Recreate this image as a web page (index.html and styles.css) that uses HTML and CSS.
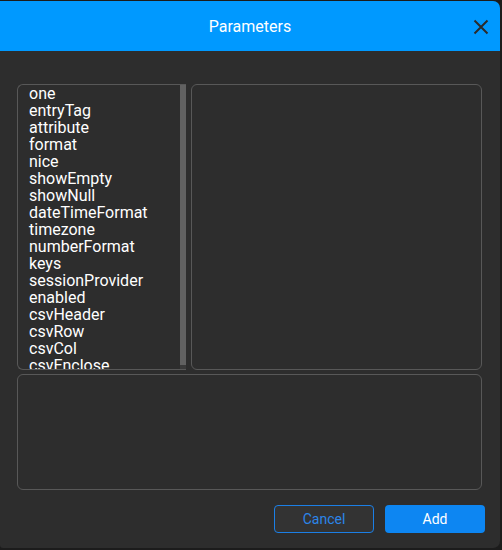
FILE: index.html
```html
<!DOCTYPE html>
<html>
<head>
<meta charset="utf-8">
<link rel="stylesheet" href="styles.css">
</head>
<body>
<div class="dialog">
  <div class="header">
    <span class="title">Parameters</span>
    <svg class="close" width="16" height="16" viewBox="0 0 16 16"><path d="M1.5 1.5 L14.5 14.5 M14.5 1.5 L1.5 14.5" stroke="#2b2b2b" stroke-width="2" fill="none"/></svg>
  </div>
  <div class="body">
    <div class="top-row">
      <div class="list-box">
        <div class="list">
          <div class="item">one</div>
          <div class="item">entryTag</div>
          <div class="item">attribute</div>
          <div class="item">format</div>
          <div class="item">nice</div>
          <div class="item">showEmpty</div>
          <div class="item">showNull</div>
          <div class="item">dateTimeFormat</div>
          <div class="item">timezone</div>
          <div class="item">numberFormat</div>
          <div class="item">keys</div>
          <div class="item">sessionProvider</div>
          <div class="item">enabled</div>
          <div class="item">csvHeader</div>
          <div class="item">csvRow</div>
          <div class="item">csvCol</div>
          <div class="item">csvEnclose</div>
        </div>
        <div class="scrollbar"><div class="thumb"></div></div>
      </div>
      <div class="detail-box"></div>
    </div>
    <div class="text-box"></div>
    <div class="actions">
      <button class="btn cancel">Cancel</button>
      <button class="btn add">Add</button>
    </div>
  </div>
</div>
</body>
</html>
```

FILE: styles.css
```css
html, body {
  margin: 0;
  padding: 0;
  background: #1c1c1c;
  font-family: Roboto, "Liberation Sans", sans-serif;
}
body {
  width: 502px;
  height: 550px;
  overflow: hidden;
}
.dialog {
  margin-top: 1px;
  width: 500px;
  height: 547px;
  background: #2d2d2d;
  border-radius: 0 7px 7px 3px;
  overflow: hidden;
  display: flex;
  flex-direction: column;
}
.header {
  height: 50px;
  flex: 0 0 50px;
  background: #0099ff;
  display: flex;
  align-items: center;
  justify-content: center;
  position: relative;
}
.title {
  color: #ffffff;
  font-size: 16px;
  margin-top: 1px;
}
.close {
  position: absolute;
  right: 11px;
  top: 18px;
}
.body {
  padding: 33px 18px 0 17px;
  display: flex;
  flex-direction: column;
}
.top-row {
  display: flex;
  height: 286px;
  gap: 5px;
}
.list-box {
  width: 168px;
  border: 1px solid #585858;
  border-right: none;
  border-radius: 6px 0 0 6px;
  display: flex;
  overflow: hidden;
}
.list {
  flex: 1;
  overflow: hidden;
  padding-left: 11px;
  padding-top: 0px;
}
.item {
  color: #ffffff;
  font-size: 16px;
  line-height: 17px;
  white-space: nowrap;
}
.scrollbar {
  width: 6px;
  background: #3a3a3a;
  display: flex;
  flex-direction: column;
}
.thumb {
  flex: 1;
  margin-bottom: 4px;
  background: #616161;
}
.detail-box {
  width: 289px;
  border: 1px solid #585858;
  border-radius: 6px;
}
.text-box {
  margin-top: 4px;
  height: 114px;
  border: 1px solid #585858;
  border-radius: 6px;
}
.actions {
  display: flex;
  justify-content: flex-end;
  gap: 11px;
  margin-top: 15px;
  margin-right: -3px;
}
.btn {
  width: 100px;
  height: 28px;
  border-radius: 4px;
  font-family: Roboto, "Liberation Sans", sans-serif;
  font-size: 14px;
  padding: 0;
  cursor: pointer;
}
.cancel {
  background: #333333;
  border: 1px solid #1b7fe6;
  color: #2b86ea;
}
.add {
  background: #0d86f2;
  border: none;
  color: #ffffff;
}
```
